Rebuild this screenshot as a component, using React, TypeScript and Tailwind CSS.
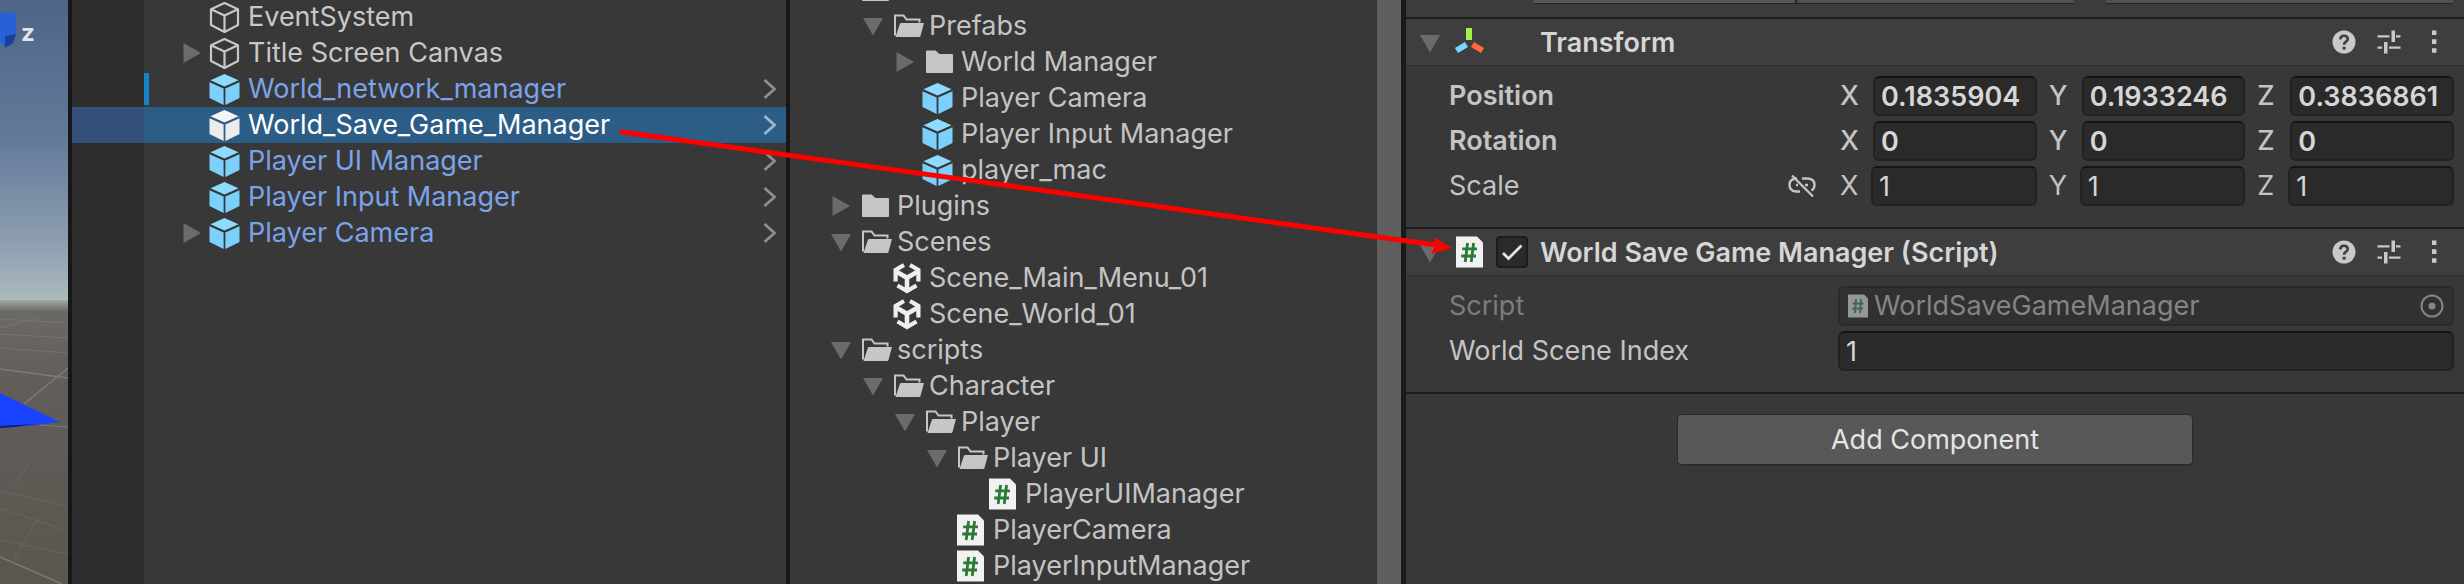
import React from "react";

type IconName = "cube" | "prefab" | "prefabSelected" | "folder" | "folderOpen" | "scene" | "script";

function Cube({ variant }: { variant: "outline" | "blue" | "white" }) {
  if (variant === "outline") {
    return (
      <svg viewBox="0 0 32 32" className="size-8 shrink-0" fill="none" stroke="#c8c8c8" strokeWidth="2.2" strokeLinejoin="round">
        <path d="M16.5 2 L30 8.2 V24 L16.5 31 L3 24 V8.2 Z M3 8.2 L16.5 14.5 L30 8.2 M16.5 14.5 V31" />
      </svg>
    );
  }
  const top = variant === "blue" ? "#8ddcff" : "#f4f4f4";
  const side = variant === "blue" ? "#7bd1fb" : "#ececec";
  return (
    <svg viewBox="0 0 32 32" className="size-8 shrink-0">
      <path d="M16.5 1 L30.5 7.2 L16.5 13.4 L2.5 7.2 Z" fill={top} />
      <path d="M1.5 9.2 L15.6 15.4 V32 L1.5 25 Z" fill={side} />
      <path d="M31.5 9.2 L17.4 15.4 V32 L31.5 25 Z" fill={side} />
    </svg>
  );
}

function ScriptIcon() {
  return (
    <svg viewBox="0 0 32 32" className="size-8 shrink-0">
      <path d="M4 0.5 H25 L31 6.5 V31.5 H4 Z" fill="#f1f1f1" />
      <path d="M15.6 7 L13.2 26 M21.6 7 L19.2 26 M10.2 12.8 H25 M9.2 20 H24" stroke="#2a7a35" strokeWidth="2.8" fill="none" />
    </svg>
  );
}

function Icon({ name }: { name: IconName }) {
  switch (name) {
    case "cube":
      return <Cube variant="outline" />;
    case "prefab":
      return <Cube variant="blue" />;
    case "prefabSelected":
      return <Cube variant="white" />;
    case "script":
      return <ScriptIcon />;
    case "folder":
      return (
        <svg viewBox="0 0 32 32" className="size-8 shrink-0">
          <path d="M5 5.5 Q5 4.5 6 4.5 H14.5 L18.5 8 H31 Q32 8 32 9 V26 Q32 27 31 27 H6 Q5 27 5 26 Z" fill="#c6c6c6" />
        </svg>
      );
    case "folderOpen":
      return (
        <svg viewBox="0 0 32 32" className="size-8 shrink-0 overflow-visible">
          <path d="M6 25.5 V5.5 H14.5 L17.5 9.5 H30.5 V12.5" fill="none" stroke="#c6c6c6" strokeWidth="2" />
          <path d="M12 13 H35 L31.5 26 Q31.2 27 30 27 H6.5 L7.5 24 L10.8 14 Q11 13 12 13 Z" fill="#c6c6c6" />
        </svg>
      );
    case "scene":
      return (
        <svg viewBox="0 0 32 32" className="size-8 shrink-0" fill="none" stroke="#efefef" strokeWidth="4.6">
          <path d="M18 15.5 V29 M8 10 L18 15.8 L28 10" />
          <path d="M15 3 L6.6 8 V19.5 M21 3 L29.4 8 V19.5 M8.5 23.5 L18 29 L27.5 23.5" strokeWidth="4.2" />
        </svg>
      );
  }
}

function Foldout({ state }: { state?: "open" | "closed" }) {
  return (
    <svg viewBox="0 0 24 24" className="size-6 shrink-0" fill="#6b6b6b">
      {state === "open" && <path d="M2 4 H22 L12 21.5 Z" />}
      {state === "closed" && <path d="M3.5 2 V22 L21 12 Z" />}
    </svg>
  );
}

interface HierarchyItem {
  label: string;
  icon: IconName;
  foldout?: "open" | "closed";
  prefab?: boolean;
  selected?: boolean;
  added?: boolean;
}

const hierarchy: HierarchyItem[] = [
  { label: "EventSystem", icon: "cube" },
  { label: "Title Screen Canvas", icon: "cube", foldout: "closed" },
  { label: "World_network_manager", icon: "prefab", prefab: true, added: true },
  { label: "World_Save_Game_Manager", icon: "prefabSelected", prefab: true, selected: true },
  { label: "Player UI Manager", icon: "prefab", prefab: true },
  { label: "Player Input Manager", icon: "prefab", prefab: true },
  { label: "Player Camera", icon: "prefab", prefab: true, foldout: "closed" },
];

function HierarchyRow({ item }: { item: HierarchyItem }) {
  const text = item.selected ? "text-white" : item.prefab ? "text-[#7ba3ea]" : "text-[#c8c8c8]";
  return (
    <li className="flex h-9">
      <div className={`w-[72px] shrink-0 ${item.selected ? "bg-[#34507a]" : ""}`} />
      <div className={`flex min-w-0 flex-1 items-center gap-1 pr-2 ${item.selected ? "bg-[#2c5d87]" : ""}`}>
        <div className={`h-8 w-[5px] shrink-0 ${item.added ? "bg-[#1184c6]" : ""}`} />
        <div className="flex min-w-0 flex-1 items-center gap-1 pl-[27px]">
          <Foldout state={item.foldout} />
          <Icon name={item.icon} />
          <span className={`truncate pl-1 ${text}`}>{item.label}</span>
        </div>
        {item.prefab && (
          <svg viewBox="0 0 16 24" className="h-6 w-4 shrink-0" fill="none" stroke={item.selected ? "#9fb4c6" : "#8e8e8e"} strokeWidth="2.8">
            <path d="M2.5 3 L12.5 12 L2.5 21" />
          </svg>
        )}
      </div>
    </li>
  );
}

interface ProjectItem {
  label: string;
  icon: IconName;
  level: 0 | 1 | 2 | 3 | 4;
  foldout?: "open" | "closed";
}

const project: ProjectItem[] = [
  { label: "", icon: "folder", level: 0 },
  { label: "Prefabs", icon: "folderOpen", level: 1, foldout: "open" },
  { label: "World Manager", icon: "folder", level: 2, foldout: "closed" },
  { label: "Player Camera", icon: "prefab", level: 2 },
  { label: "Player Input Manager", icon: "prefab", level: 2 },
  { label: "player_mac", icon: "prefab", level: 2 },
  { label: "Plugins", icon: "folder", level: 0, foldout: "closed" },
  { label: "Scenes", icon: "folderOpen", level: 0, foldout: "open" },
  { label: "Scene_Main_Menu_01", icon: "scene", level: 1 },
  { label: "Scene_World_01", icon: "scene", level: 1 },
  { label: "scripts", icon: "folderOpen", level: 0, foldout: "open" },
  { label: "Character", icon: "folderOpen", level: 1, foldout: "open" },
  { label: "Player", icon: "folderOpen", level: 2, foldout: "open" },
  { label: "Player UI", icon: "folderOpen", level: 3, foldout: "open" },
  { label: "PlayerUIManager", icon: "script", level: 4 },
  { label: "PlayerCamera", icon: "script", level: 3 },
  { label: "PlayerInputManager", icon: "script", level: 3 },
];

const indent = ["pl-[39px]", "pl-[71px]", "pl-[103px]", "pl-[135px]", "pl-[167px]"];

function ProjectRow({ item }: { item: ProjectItem }) {
  return (
    <li className={`flex h-9 items-center gap-1 ${indent[item.level]}`}>
      <Foldout state={item.foldout} />
      <Icon name={item.icon} />
      {item.label && <span className="truncate pl-1 text-[#c4c4c4]">{item.label}</span>}
    </li>
  );
}

function SceneView() {
  return (
    <section aria-label="Scene" className="w-[68px] shrink-0">
      <svg viewBox="0 0 68 584" preserveAspectRatio="none" className="h-full w-full">
        <defs>
          <linearGradient id="sky" x1="0" y1="0" x2="0" y2="1">
            <stop offset="0" stopColor="#4f6587" />
            <stop offset="0.45" stopColor="#63799a" />
            <stop offset="0.8" stopColor="#8d9eb0" />
            <stop offset="1" stopColor="#adbbbb" />
          </linearGradient>
          <linearGradient id="ground" x1="0" y1="0" x2="0" y2="1">
            <stop offset="0" stopColor="#9fa9a7" />
            <stop offset="0.04" stopColor="#6c6866" />
            <stop offset="0.3" stopColor="#625d59" />
            <stop offset="1" stopColor="#5c5650" />
          </linearGradient>
        </defs>
        <rect width="68" height="302" fill="url(#sky)" />
        <rect y="300" width="68" height="284" fill="url(#ground)" />
        <g stroke="#8b8784" strokeWidth="1" fill="none" opacity="0.7">
          <path d="M0 319 L68 323 M0 328 L40 317 M0 334 L68 338 M0 348 L68 353" opacity="0.6" />
          <path d="M0 369 L68 378" strokeWidth="1.5" />
          <path d="M24 404 L68 368" strokeWidth="1.5" />
          <path d="M40 425 L68 427" />
          <path d="M0 491 L68 506 M0 508 L68 531 M0 540 L68 554 M38 516 L14 560 M30 462 L14 486" opacity="0.4" />
          <path d="M0 557 L62 584" strokeWidth="1.5" />
        </g>
        <path d="M0 393 L60 422 L36 425 L0 428 Z" fill="#1a43ff" />
        <path d="M0 426 L36 424 L14 427 L0 428 Z" fill="#0b1d80" />
        <path d="M0 13 L14 12 L16 16 V34 L13 43 L5 48 L0 41 Z" fill="#2861d6" />
        <path d="M5 36 L16 34 L13 43 L5 48 Z" fill="#1b3f9c" />
        <text x="21" y="41" fontFamily="Inter, sans-serif" fontSize="24" fontWeight="700" fill="#e3e6ec">z</text>
      </svg>
    </section>
  );
}

function HeaderIcons({ component }: { component: string }) {
  return (
    <div className="ml-auto flex items-center gap-[21px]">
      <button type="button" aria-label={`${component} help`}>
        <svg viewBox="0 0 24 24" className="size-6">
          <circle cx="12" cy="12" r="11.5" fill="#c9c9c9" />
          <path d="M8.2 9.4 Q8.4 5.8 12 5.8 Q15.7 5.8 15.7 9 Q15.7 11 13.7 12 Q12.1 12.8 12.1 14.8" fill="none" stroke="#3e3e3e" strokeWidth="2.6" />
          <rect x="10.6" y="16.8" width="3" height="2.8" fill="#3e3e3e" />
        </svg>
      </button>
      <button type="button" aria-label={`${component} presets`}>
        <svg viewBox="0 0 24 24" className="size-6" fill="#c9c9c9">
          <path d="M0.5 5.3 H12.5 V7.5 H0.5 Z M14.5 0.5 H18 V12 H14.5 Z M19 5.3 H23.5 V7.5 H19 Z" />
          <path d="M0.5 16.5 H5 V18.7 H0.5 Z M7 12 H10.5 V23.5 H7 Z M12 16.5 H23.5 V18.7 H12 Z" />
        </svg>
      </button>
      <button type="button" aria-label={`${component} menu`}>
        <svg viewBox="0 0 24 24" className="size-6" fill="#c9c9c9">
          <path d="M10 0.5 h4.4 v4.6 h-4.4 Z M10 9.3 h4.4 v4.6 h-4.4 Z M10 18.2 h4.4 v4.6 h-4.4 Z" />
        </svg>
      </button>
    </div>
  );
}

function ComponentHeader({ icon, toggle, title }: { icon: React.ReactNode; toggle?: boolean; title: string }) {
  return (
    <header className="flex h-[47px] items-center gap-3 border-b border-[#303030] bg-[#3e3e3e] pr-[18px] pl-3.5">
      <svg viewBox="0 0 20 24" className="h-6 w-5 shrink-0" fill="#6b6b6b">
        <path d="M0 5 H20 L10 22.5 Z" />
      </svg>
      {icon}
      {toggle ? (
        <span className="grid size-8 shrink-0">
          <input
            type="checkbox"
            defaultChecked
            aria-label={`Enable ${title}`}
            className="peer col-start-1 row-start-1 size-8 appearance-none rounded-[4px] border-2 border-[#1c1c1c] bg-[#2a2a2a]"
          />
          <svg viewBox="0 0 32 32" className="pointer-events-none col-start-1 row-start-1 hidden size-8 peer-checked:block" fill="none" stroke="#e4e4e4" strokeWidth="2.8">
            <path d="M7 17 L12.5 22.5 L25.5 9.5" />
          </svg>
        </span>
      ) : (
        <span className="size-8 shrink-0" />
      )}
      <h2 className="truncate pt-0.5 font-semibold text-[#d6d6d6]">{title}</h2>
      <HeaderIcons component={title} />
    </header>
  );
}

const fieldBox = "h-10 w-full min-w-0 rounded-[6px] border-2 border-[#222] border-t-[#141414] bg-[#2a2a2a] px-1.5 text-[#d6d6d6] outline-none";

function VectorRow({ label, values, strong, linked }: { label: string; values: [string, string, string]; strong?: boolean; linked?: boolean }) {
  const axes = ["X", "Y", "Z"];
  return (
    <div className={`flex items-center ${strong ? "font-semibold" : ""}`}>
      <div className="flex w-[391px] shrink-0 items-center justify-between pr-6 text-[#c4c4c4]">
        <span>{label}</span>
        {linked && (
          <svg viewBox="0 0 28 24" className="h-6 w-7" fill="none" stroke="#c4c4c4" strokeWidth="2.4">
            <path d="M12 17.5 H8 Q1.5 17 1.5 11 Q1.5 5 8 4.5 H9 M14 4.5 H20 Q26.5 5 26.5 11 Q26.5 14.5 23.5 16.5 M8 11 H10 M17 11 H20" />
            <path d="M4 1.5 L25 22.5" />
          </svg>
        )}
      </div>
      <div className="grid flex-1 grid-cols-3 gap-3">
        {axes.map((axis, i) => (
          <label key={axis} className="flex items-center text-[#c4c4c4]">
            <span className={`shrink-0 ${strong ? "w-[33px] font-medium" : "w-[31px]"}`}>{axis}</span>
            <input aria-label={`${label} ${axis}`} defaultValue={values[i]} className={fieldBox} />
          </label>
        ))}
      </div>
    </div>
  );
}

function Inspector() {
  return (
    <section aria-label="Inspector" className="min-w-0 grow-[1058] basis-0">
      <div className="flex h-[17px] items-start gap-8 bg-[#3c3c3c] pr-[11px] pl-32">
        <div className="flex h-1 grow-[539] border-b border-[#242424]">
          <div className="grow-[261] border-r-2 border-[#242424] bg-[#585858]" />
          <div className="grow-[278] bg-[#515151]" />
        </div>
        <div className="h-1 grow-[347] border-b border-[#242424] bg-[#515151]" />
      </div>

      <section className="border-t-2 border-[#1d1d1d]">
        <ComponentHeader
          title="Transform"
          icon={
            <svg viewBox="0 0 32 32" className="size-8 shrink-0" strokeWidth="6" fill="none">
              <path d="M17 2 V14" stroke="#a8ef4e" />
              <path d="M14.5 18.5 L4.5 24.5" stroke="#7bd6ff" />
              <path d="M20.5 18.5 L30.5 24.5" stroke="#ff6a3c" />
            </svg>
          }
        />
        <div className="flex flex-col gap-[5px] pt-2.5 pr-2.5 pb-[21px] pl-[43px]">
          <VectorRow label="Position" values={["0.1835904", "0.1933246", "0.3836861"]} strong />
          <VectorRow label="Rotation" values={["0", "0", "0"]} strong />
          <VectorRow label="Scale" values={["1", "1", "1"]} linked />
        </div>
      </section>

      <section className="border-y-2 border-[#1d1d1d]">
        <ComponentHeader title="World Save Game Manager (Script)" icon={<ScriptIcon />} toggle />
        <div className="flex flex-col gap-[5px] pt-2.5 pr-2.5 pb-[21px] pl-[43px]">
          <div className="flex items-center">
            <span className="w-[389px] shrink-0 text-[#7c7c7c]">Script</span>
            <div className="flex h-10 min-w-0 flex-1 items-center rounded-[6px] border-2 border-[#2a2a2a] bg-[#313131] px-2 text-[#858585]">
              <svg viewBox="0 0 20 24" className="h-6 w-5 shrink-0">
                <path d="M0 0.5 H16 L20 4.5 V23.5 H0 Z" fill="#979797" />
                <path d="M8 5 L7 19 M13 5 L12 19 M4.5 9.5 H15.5 M4 14.5 H15" stroke="#41694a" strokeWidth="2" />
              </svg>
              <span className="min-w-0 flex-1 truncate pl-1.5">WorldSaveGameManager</span>
              <button type="button" aria-label="Select script">
                <svg viewBox="0 0 24 24" className="size-6" fill="none" stroke="#858585" strokeWidth="2">
                  <circle cx="12" cy="12" r="10.5" />
                  <circle cx="12" cy="12" r="3.5" fill="#858585" stroke="none" />
                </svg>
              </button>
            </div>
          </div>
          <div className="flex items-center">
            <label htmlFor="world-scene-index" className="w-[389px] shrink-0 text-[#c4c4c4]">
              World Scene Index
            </label>
            <input id="world-scene-index" defaultValue="1" className={fieldBox} />
          </div>
        </div>
      </section>

      <div className="flex justify-center pt-5">
        <button type="button" className="h-[52px] w-[516px] rounded-[5px] border border-b-2 border-[#2b2b2b] bg-[#585858] text-[#e4e4e4]">
          Add Component
        </button>
      </div>
    </section>
  );
}

export default function App() {
  return (
    <main className="relative flex h-screen overflow-hidden bg-[#383838] font-['Inter',sans-serif] text-[27px] leading-9">
      <SceneView />
      <div className="w-1 shrink-0 bg-[#171717]" />
      <section aria-label="Hierarchy" className="min-w-0 grow-[714] basis-0 bg-[linear-gradient(to_right,#2d2d2d_72px,#383838_72px)]">
        <ul className="-mt-px">
          {hierarchy.map((item) => (
            <HierarchyRow key={item.label} item={item} />
          ))}
        </ul>
      </section>
      <div className="w-1 shrink-0 bg-[#171717]" />
      <section aria-label="Project" className="flex min-w-0 grow-[611] basis-0">
        <ul className="-mt-7 min-w-0 flex-1">
          {project.map((item, i) => (
            <ProjectRow key={i} item={item} />
          ))}
        </ul>
        <div className="w-6 shrink-0 bg-[#5f5f5f]" />
      </section>
      <div className="w-[5px] shrink-0 bg-[#1a1a1a]" />
      <Inspector />
      <svg viewBox="0 0 2464 584" preserveAspectRatio="none" className="pointer-events-none absolute inset-0 h-full w-full">
        <path d="M622 132 L1436 245" stroke="#ff0000" strokeWidth="5" strokeLinecap="round" />
        <path d="M1452 248 L1431 254 L1435 246 L1434 237 Z" fill="#ff0000" />
      </svg>
    </main>
  );
}
